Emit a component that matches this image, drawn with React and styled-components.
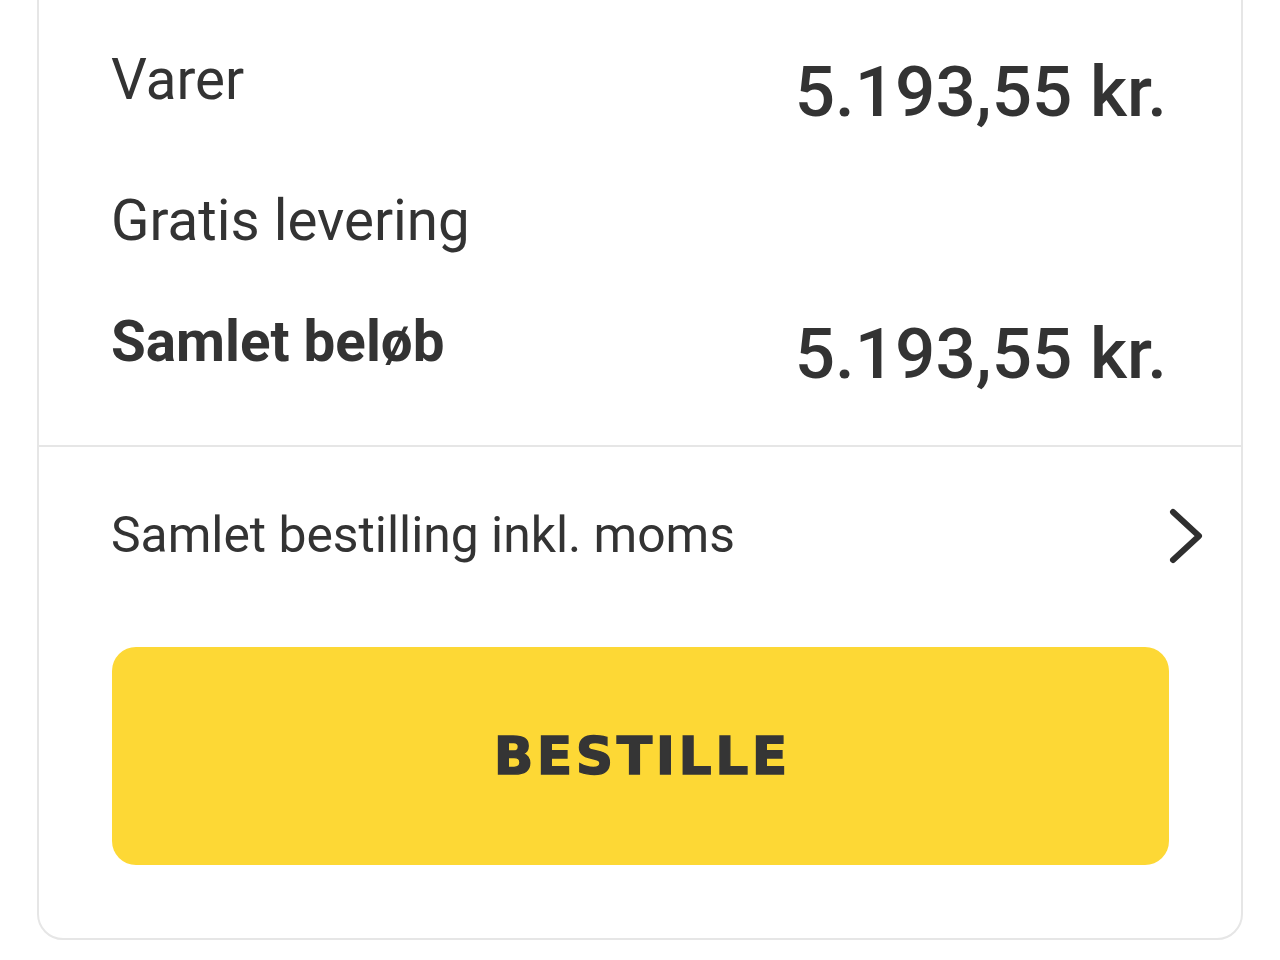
import React from "react";
import styled, { createGlobalStyle } from "styled-components";

const GlobalStyle = createGlobalStyle`
    html, body {
        margin: 0;
        padding: 0;
        background: #fff;
        overflow: hidden;
    }
    body {
        font-family: Roboto, "Liberation Sans", sans-serif;
        color: #333;
    }
`;

const Page = styled.div`
    display: flow-root;
    padding: 0 37px 40px;
`;

const Card = styled.div`
    margin-top: -40px;
    border: 2px solid #e6e6e6;
    border-radius: 26px;
    background: #fff;
`;

const Summary = styled.div`
    display: flex;
    flex-direction: column;
    gap: 55px;
    padding: 85px 74px 49px 72px;
    border-bottom: 2px solid #e6e6e6;
`;

const Row = styled.div`
    display: flex;
    align-items: flex-start;
    justify-content: space-between;
`;

const Label = styled.span`
    font-size: 56.5px;
    font-weight: ${(p) => (p.$bold ? 700 : 400)};
    line-height: 1.172;
    color: #333;
`;

const Amount = styled.span`
    margin-top: 3px;
    font-size: 71px;
    font-weight: 500;
    line-height: 1.172;
    color: #333;
`;

const Details = styled.div`
    display: flex;
    align-items: center;
    justify-content: space-between;
    padding: 58px 36px 0 72px;
`;

const DetailsText = styled.span`
    font-size: 49.8px;
    line-height: 1.172;
    color: #333;
`;

const Actions = styled.div`
    padding: 80px 72px 73px 73px;
`;

const OrderButton = styled.button`
    display: flex;
    align-items: center;
    justify-content: center;
    width: 100%;
    height: 218px;
    border: none;
    border-radius: 24px;
    background: #fdd835;
    color: #353535;
    font-family: "DejaVu Sans", sans-serif;
    font-weight: 700;
    font-size: 52px;
    letter-spacing: 3.5px;
    text-indent: 3.5px;
    -webkit-text-stroke: 1.4px #353535;
    cursor: pointer;
`;

const Chevron = () => (
    <svg width="38" height="62" viewBox="0 0 38 62" fill="none">
        <path d="M6 7 L32 31 L6 55" stroke="#2f2f2f" strokeWidth="6" strokeLinecap="round" strokeLinejoin="round" />
    </svg>
);

export default function App() {
    return (
        <Page>
            <GlobalStyle />
            <Card>
                <Summary>
                    <Row>
                        <Label>Varer</Label>
                        <Amount>5.193,55 kr.</Amount>
                    </Row>
                    <Row>
                        <Label>Gratis levering</Label>
                    </Row>
                    <Row>
                        <Label $bold>Samlet beløb</Label>
                        <Amount>5.193,55 kr.</Amount>
                    </Row>
                </Summary>
                <Details>
                    <DetailsText>Samlet bestilling inkl. moms</DetailsText>
                    <Chevron />
                </Details>
                <Actions>
                    <OrderButton>BESTILLE</OrderButton>
                </Actions>
            </Card>
        </Page>
    );
}
